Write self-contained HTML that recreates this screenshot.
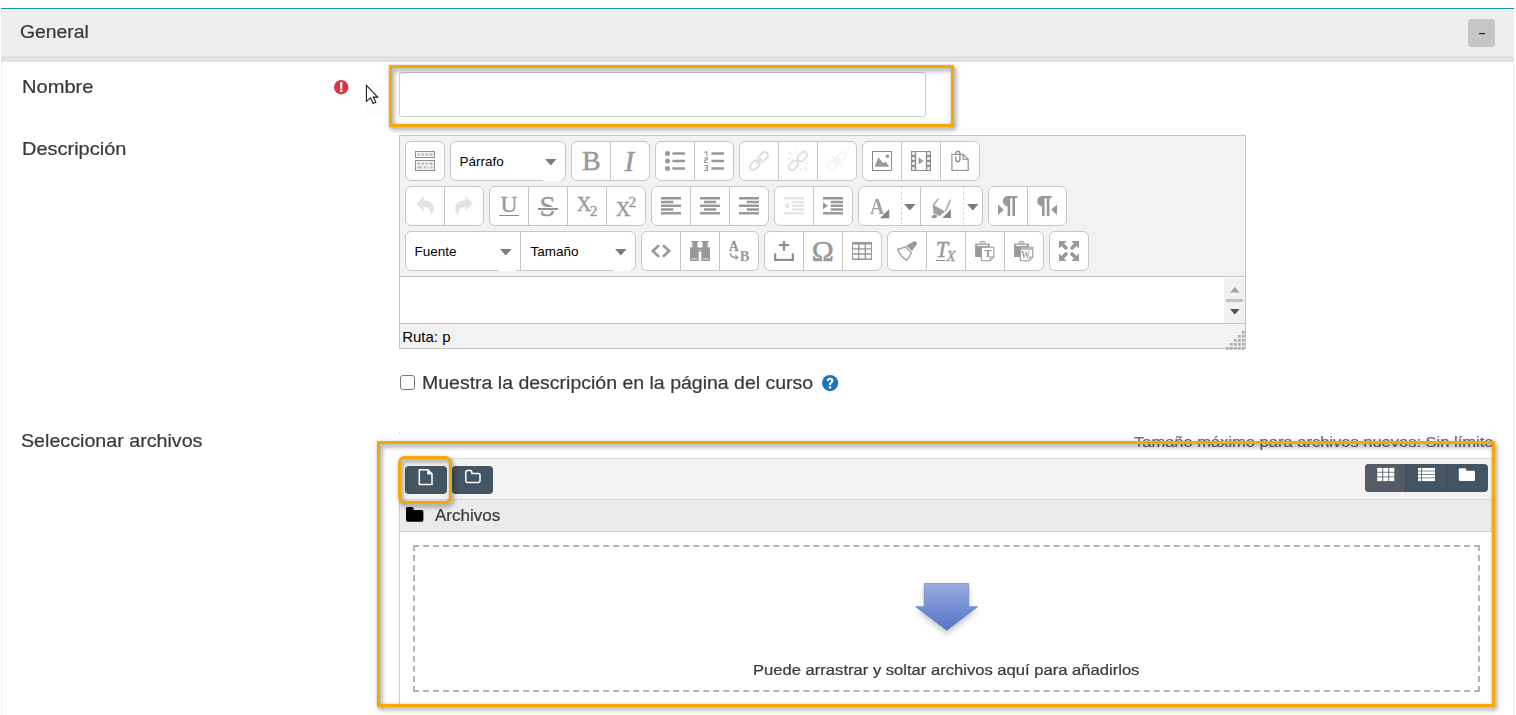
<!DOCTYPE html>
<html lang="es">
<head>
<meta charset="utf-8">
<title>General</title>
<style>
html,body{margin:0;padding:0;background:#fff;}
body{width:1516px;height:715px;position:relative;overflow:hidden;font-family:"Liberation Sans",sans-serif;color:#373a3c;}
.a{position:absolute;box-sizing:border-box;}
.t{position:absolute;white-space:nowrap;line-height:1;transform-origin:0 0;}
svg{position:absolute;overflow:visible;}
/* header */
#teal{left:1px;top:8px;width:1513px;height:1px;background:#0a98a8;}
#hdr{left:1px;top:9px;width:1513px;height:47px;background:#eeeeee;}
#band{left:1px;top:56px;width:1513px;height:6px;background:#e1e1e1;}
#lline{left:1px;top:62px;width:1px;height:653px;background:#f1f1f1;}
#rline{left:1513px;top:62px;width:1px;height:653px;background:#eeeeee;}
#collapse{left:1468px;top:19px;width:27px;height:28px;background:#c6c6c6;border-radius:3px;}
#collapse i{position:absolute;left:11px;top:14px;width:6px;height:1px;background:#333;}
/* name input */
#name{left:399px;top:72px;width:527px;height:45px;border:1px solid #ccc;border-radius:3px;background:#fff;}
.hl{position:absolute;box-sizing:border-box;border:3px solid #f6a806;filter:drop-shadow(2px 3px 2px rgba(0,0,0,.35)) drop-shadow(0 0 1.6px rgba(0,0,0,.16));}
/* editor */
#ed{left:399px;top:135px;width:847px;height:214px;border:1px solid #c4c4c4;background:#f2f2f2;}
#edc{left:400px;top:277px;width:845px;height:46px;background:#fff;}
.ln{position:absolute;height:1px;background:#c4c4c4;}
.b{position:absolute;box-sizing:border-box;height:40px;background:#fff;border:1px solid #c6c6c6;border-radius:6px;}
.d{position:absolute;width:1px;height:38px;background:#c6c6c6;}
.dd{position:absolute;width:0;height:38px;border-left:1px dashed #d9d9d9;}
.wg{position:absolute;width:18px;height:2px;background:#fff;}
.st{font-size:13.5px;color:#000;}
/* file manager */
#fmt{left:399px;top:458px;width:1094px;height:42px;background:#f3f3f3;border-top:1px solid #dcdcdc;border-left:1px solid #ccc;border-bottom:1px solid #dadada;}
#fmp{left:399px;top:500px;width:1094px;height:32px;background:#ebebeb;border-left:1px solid #ccc;border-bottom:1px solid #d4d4d4;}
#fml{left:399px;top:532px;width:1px;height:172px;background:#ccc;}
.fb{position:absolute;box-sizing:border-box;height:28px;background:#435563;border-radius:4px;}
#drop{left:413px;top:545px;width:1067px;height:147px;border:2px dashed #b5b5b5;}
</style>
</head>
<body>
<!-- header -->
<div class="a" id="teal"></div>
<div class="a" id="hdr"></div>
<div class="a" id="band"></div>
<div class="a" id="lline"></div>
<div class="a" id="rline"></div>
<div class="a" id="collapse"></div>
<span class="t" id="tDash" style="left:1478.2px;top:26.4px;font-size:14px;color:#222;transform:scaleX(1.75);">-</span>
<span class="t" id="tGeneral" style="left:19.5px;top:23.3px;font-size:18px;transform:scaleX(1.075);-webkit-text-stroke:.22px #373a3c;">General</span>

<!-- labels -->
<span class="t" id="tNombre" style="left:21.5px;top:77.6px;font-size:18.5px;transform:scaleX(1.085);-webkit-text-stroke:.22px #373a3c;">Nombre</span>
<span class="t" id="tDesc" style="left:21.5px;top:140.4px;font-size:18.5px;transform:scaleX(1.08);-webkit-text-stroke:.22px #373a3c;">Descripción</span>
<span class="t" id="tSel" style="left:21.4px;top:431.8px;font-size:18.5px;transform:scaleX(1.063);-webkit-text-stroke:.22px #373a3c;">Seleccionar archivos</span>

<!-- required icon -->
<svg id="req" style="left:334px;top:79.6px" width="14.4" height="14.4" viewBox="0 0 14.4 14.4"><circle cx="7.2" cy="7.2" r="7.2" fill="#dc3545"/><path d="M5.9 2.2 H8.5 L8.2 8.7 H6.2 Z" fill="#fff"/><rect x="6" y="9.6" width="2.4" height="2.4" rx=".5" fill="#fff"/></svg>

<!-- name input -->
<div class="a" id="name"></div>
<div class="hl" style="left:389px;top:65px;width:565px;height:62px;"></div>

<!-- editor -->
<div class="a" id="ed"></div>
<div class="a" id="edc"></div>
<div class="ln" style="left:400px;top:276px;width:845px;"></div>
<div class="ln" style="left:400px;top:323px;width:845px;"></div>
<div id="tb">
<div class="b" style="left:405px;top:141px;width:40px"></div>
<svg style="left:415.0px;top:151.0px" width="20" height="20" viewBox="0 0 20 20"><rect x=".5" y=".5" width="19" height="6" fill="#f4f4f4" stroke="#8e8e8e"/><rect x=".5" y="9.5" width="19" height="10" fill="#f4f4f4" stroke="#8e8e8e"/><rect x="2.5" y="2.5" width="2.5" height="2" fill="#b4b4b4"/><rect x="6.4" y="2.5" width="2.5" height="2" fill="#b4b4b4"/><rect x="10.3" y="2.5" width="2.5" height="2" fill="#b4b4b4"/><rect x="14.2" y="2.5" width="3.4" height="2" fill="#b4b4b4"/><rect x="2.5" y="11.6" width="2.5" height="2" fill="#b4b4b4"/><rect x="6.4" y="11.6" width="2.5" height="2" fill="#b4b4b4"/><rect x="10.3" y="11.6" width="2.5" height="2" fill="#b4b4b4"/><rect x="14.2" y="11.6" width="3.4" height="2" fill="#b4b4b4"/><rect x="2.5" y="15.4" width="4.2" height="2" fill="#b4b4b4"/><rect x="8.6" y="15.4" width="2.3" height="2" fill="#b4b4b4"/><rect x="12.3" y="15.4" width="1.2" height="2" fill="#b4b4b4"/><rect x="15.3" y="15.4" width="2.3" height="2" fill="#b4b4b4"/></svg>
<div class="b" style="left:450px;top:141px;width:116px"></div>
<span class="t st" id="tParrafo" style="left:459.6px;top:155.2px">Párrafo</span>
<svg style="left:545px;top:159px" width="11.6" height="6.4" viewBox="0 0 11.6 6.4"><path d="M0 0H11.6L5.8 6.4Z" fill="#7c7c7c"/></svg>
<div class="wg" style="left:543px;top:179px"></div>
<div class="b" style="left:571px;top:141px;width:79px"></div>
<div class="d" style="left:610px;top:142px"></div>
<span class="t" id="tB" style="left:582px;top:147.4px;font:28px 'Liberation Serif',serif;color:#999;line-height:1;-webkit-text-stroke:.5px #999">B</span>
<span class="t" id="tI" style="left:624.6px;top:146.6px;font:italic 29px 'Liberation Serif',serif;color:#999;line-height:1;-webkit-text-stroke:.5px #999">I</span>
<div class="b" style="left:655px;top:141px;width:79px"></div>
<div class="d" style="left:694px;top:142px"></div>
<svg style="left:665.0px;top:151.0px" width="20" height="20" viewBox="0 0 20 20"><circle cx="2.5" cy="2.5" r="2.5" fill="#999"/><rect x="7.4" y="1.25" width="12.6" height="2.5" fill="#999"/><circle cx="2.5" cy="10" r="2.5" fill="#999"/><rect x="7.4" y="8.75" width="12.6" height="2.5" fill="#999"/><circle cx="2.5" cy="17.5" r="2.5" fill="#999"/><rect x="7.4" y="16.25" width="12.6" height="2.5" fill="#999"/></svg>
<svg style="left:704.0px;top:151.0px" width="20" height="20" viewBox="0 0 20 20"><rect x="7.4" y="1.25" width="12.6" height="2.5" fill="#999"/><rect x="7.4" y="8.75" width="12.6" height="2.5" fill="#999"/><rect x="7.4" y="16.25" width="12.6" height="2.5" fill="#999"/><path d="M0.4 1 L2.2 0.2 H3.4 V4.8 H2.2 V1.5 L0.4 2 Z" fill="#999"/><path d="M0.2 6.3 H4 V9.4 H1.4 V11 H4 V12.1 H0.2 V8.4 H2.8 V7.4 H0.2 Z" fill="#999"/><path d="M0.2 14 H4 V20 H0.2 V18.9 H2.8 V17.5 H0.8 V16.5 H2.8 V15.1 H0.2 Z" fill="#999"/></svg>
<div class="b" style="left:739px;top:141px;width:118px"></div>
<div class="d" style="left:778px;top:142px"></div>
<div class="d" style="left:817px;top:142px"></div>
<svg style="left:749.0px;top:151.0px" width="20" height="20" viewBox="0 0 20 20"><g fill="none" stroke="#dedede" stroke-width="2" stroke-linecap="round"><rect x="-5.4" y="-3.3" width="10.8" height="6.6" rx="3.3" transform="translate(14.2 5.8) rotate(-45)"/><rect x="-5.4" y="-3.3" width="10.8" height="6.6" rx="3.3" transform="translate(5.8 14.2) rotate(-45)"/><path d="M7.6 12.4 L12.4 7.6"/></g></svg>
<svg style="left:788.0px;top:151.0px" width="20" height="20" viewBox="0 0 20 20"><g fill="none" stroke="#e0e0e0" stroke-width="2" stroke-linecap="round"><rect x="-5.4" y="-3.3" width="10.8" height="6.6" rx="3.3" transform="translate(14.4 5.6) rotate(-45)"/><rect x="-5.4" y="-3.3" width="10.8" height="6.6" rx="3.3" transform="translate(5.6 14.4) rotate(-45)"/></g><g stroke="#e4e4e4" stroke-width="1.3"><path d="M1 1 L4.2 4.2 M7.6 0 V2.6 M0 7.6 H2.6 M19 19 L15.8 15.8 M12.4 20 V17.4 M20 12.4 H17.4"/></g></svg>
<svg style="left:827.0px;top:151.0px" width="20" height="20" viewBox="0 0 20 20"><g fill="none" stroke="#f3f3f3" stroke-width="2" stroke-linecap="round"><rect x="-5.4" y="-3.3" width="10.8" height="6.6" rx="3.3" transform="translate(14.2 5.8) rotate(-45)"/><rect x="-5.4" y="-3.3" width="10.8" height="6.6" rx="3.3" transform="translate(5.8 14.2) rotate(-45)"/><path d="M7.6 12.4 L12.4 7.6"/><path d="M4 4 L16 16" stroke-width="1.3"/></g></svg>
<div class="b" style="left:862px;top:141px;width:118px"></div>
<div class="d" style="left:901px;top:142px"></div>
<div class="d" style="left:940px;top:142px"></div>
<svg style="left:872.0px;top:151.0px" width="20" height="20" viewBox="0 0 20 20"><rect x=".5" y=".5" width="19" height="19" fill="#fff" stroke="#8a8a8a"/><path d="M2.6 15.8 L6.4 6.2 L11.3 12.3 L13.4 10.6 L17.4 15.8 Z" fill="#999"/><circle cx="15.4" cy="5.3" r="1.8" fill="#999"/></svg>
<svg style="left:911.0px;top:151.0px" width="20" height="20" viewBox="0 0 20 20"><rect x="0" y="0" width="20" height="20" fill="#8e8e8e"/><rect x="5.2" y="1" width="9.6" height="18" fill="#fff"/><rect x="1.2" y="1.2" width="2.6" height="2.6" fill="#fff"/><rect x="1.2" y="6.2" width="2.6" height="2.6" fill="#fff"/><rect x="1.2" y="11.2" width="2.6" height="2.6" fill="#fff"/><rect x="1.2" y="16.2" width="2.6" height="2.6" fill="#fff"/><rect x="16.2" y="1.2" width="2.6" height="2.6" fill="#fff"/><rect x="16.2" y="6.2" width="2.6" height="2.6" fill="#fff"/><rect x="16.2" y="11.2" width="2.6" height="2.6" fill="#fff"/><rect x="16.2" y="16.2" width="2.6" height="2.6" fill="#fff"/><path d="M7.6 6.2 V13.6 L12.6 9.9 Z" fill="#999"/></svg>
<svg style="left:949.8px;top:151.0px" width="20" height="20" viewBox="0 0 20 20"><path d="M1.9 3.3 H13.2 L18.2 8.4 V19.4 H1.9 Z" fill="#fff" stroke="#9a9a9a" stroke-width="1.3" stroke-linejoin="round"/><path d="M13.2 3.3 V8.4 H18.2" fill="none" stroke="#9a9a9a" stroke-width="1.3"/><path d="M5.7 3.2 V2.4 a2.1 2.1 0 0 1 4.2 0 V8.6 a2.1 2.1 0 0 1 -4.2 0 V5.6" fill="none" stroke="#909090" stroke-width="1.4"/></svg>
<div class="b" style="left:405px;top:186px;width:79px"></div>
<div class="d" style="left:444px;top:187px"></div>
<svg style="left:415.0px;top:196.0px" width="20" height="20" viewBox="0 0 20 20"><path d="M1.2 7.4 L8.7 0 V4.2 C14.2 4.2 18.8 7.4 18.8 12.4 C18.8 15.6 17 18.4 15.3 20 C16.6 15 14 10.8 8.7 10.8 V15 Z" fill="#e3e3e3"/></svg>
<svg style="left:453.5px;top:196.0px" width="20" height="20" viewBox="0 0 20 20"><path d="M1.2 7.4 L8.7 0 V4.2 C14.2 4.2 18.8 7.4 18.8 12.4 C18.8 15.6 17 18.4 15.3 20 C16.6 15 14 10.8 8.7 10.8 V15 Z" fill="#e3e3e3" transform="translate(20 0) scale(-1 1)"/></svg>
<div class="b" style="left:489px;top:186px;width:157px"></div>
<div class="d" style="left:528px;top:187px"></div>
<div class="d" style="left:567px;top:187px"></div>
<div class="d" style="left:606px;top:187px"></div>
<span class="t" id="tU" style="left:500.6px;top:192.8px;font:23.5px 'Liberation Serif',serif;color:#999;line-height:1;-webkit-text-stroke:.35px #999">U</span>
<div class="a" style="left:499px;top:214.6px;width:20px;height:1.5px;background:#8c8c8c"></div>
<span class="t" id="tS" style="left:539.6px;top:192px;font:29px 'Liberation Serif',serif;color:#999;line-height:1;-webkit-text-stroke:.35px #999">S</span>
<div class="a" style="left:538px;top:206.8px;width:20px;height:4.4px;background:#fff"></div>
<div class="a" style="left:538px;top:208.3px;width:20px;height:1.4px;background:#929292"></div>
<span class="t" id="tX1" style="left:576.8px;top:193.8px;font:20.3px 'Liberation Serif',serif;color:#999;line-height:1;-webkit-text-stroke:.35px #999">X</span>
<span class="t" id="tX1s" style="left:589.8px;top:202.6px;font:15.5px 'Liberation Serif',serif;color:#999;line-height:1;-webkit-text-stroke:.3px #999">2</span>
<span class="t" id="tX2" style="left:615.8px;top:198.7px;font:20.3px 'Liberation Serif',serif;color:#999;line-height:1;-webkit-text-stroke:.35px #999">X</span>
<span class="t" id="tX2s" style="left:628.5px;top:194.2px;font:15.5px 'Liberation Serif',serif;color:#999;line-height:1;-webkit-text-stroke:.3px #999">2</span>
<div class="b" style="left:651px;top:186px;width:118px"></div>
<div class="d" style="left:690px;top:187px"></div>
<div class="d" style="left:729px;top:187px"></div>
<svg style="left:661.0px;top:197.25px" width="20" height="17.5" viewBox="0 0 20 17.5"><rect x="0" y="0" width="20" height="2.5" fill="#999"/><rect x="0" y="3.75" width="12.3" height="2.5" fill="#999"/><rect x="0" y="7.5" width="20" height="2.5" fill="#999"/><rect x="0" y="11.25" width="12.3" height="2.5" fill="#999"/><rect x="0" y="15" width="20" height="2.5" fill="#999"/></svg>
<svg style="left:699.5px;top:197.25px" width="20" height="17.5" viewBox="0 0 20 17.5"><rect x="0" y="0" width="20" height="2.5" fill="#999"/><rect x="3.9" y="3.75" width="12.3" height="2.5" fill="#999"/><rect x="0" y="7.5" width="20" height="2.5" fill="#999"/><rect x="3.9" y="11.25" width="12.3" height="2.5" fill="#999"/><rect x="0" y="15" width="20" height="2.5" fill="#999"/></svg>
<svg style="left:738.5px;top:197.25px" width="20" height="17.5" viewBox="0 0 20 17.5"><rect x="0" y="0" width="20" height="2.5" fill="#999"/><rect x="7.7" y="3.75" width="12.3" height="2.5" fill="#999"/><rect x="0" y="7.5" width="20" height="2.5" fill="#999"/><rect x="7.7" y="11.25" width="12.3" height="2.5" fill="#999"/><rect x="0" y="15" width="20" height="2.5" fill="#999"/></svg>
<div class="b" style="left:774px;top:186px;width:79px"></div>
<div class="d" style="left:813px;top:187px"></div>
<svg style="left:784.0px;top:197.25px" width="20" height="17.5" viewBox="0 0 20 17.5"><rect x="0" y="0" width="20" height="2.5" fill="#e6e6e6"/><rect x="0" y="15" width="20" height="2.5" fill="#e6e6e6"/><rect x="7.7" y="3.75" width="12.3" height="2.5" fill="#e6e6e6"/><rect x="7.7" y="7.5" width="12.3" height="2.5" fill="#e6e6e6"/><rect x="7.7" y="11.25" width="12.3" height="2.5" fill="#e6e6e6"/><path d="M5 5.2 V12.3 L0 8.75 Z" fill="#e6e6e6"/></svg>
<svg style="left:822.5px;top:197.25px" width="20" height="17.5" viewBox="0 0 20 17.5"><rect x="0" y="0" width="20" height="2.5" fill="#999"/><rect x="0" y="15" width="20" height="2.5" fill="#999"/><rect x="7.7" y="3.75" width="12.3" height="2.5" fill="#999"/><rect x="7.7" y="7.5" width="12.3" height="2.5" fill="#999"/><rect x="7.7" y="11.25" width="12.3" height="2.5" fill="#999"/><path d="M0 5.2 V12.3 L5 8.75 Z" fill="#999"/></svg>
<div class="b" style="left:858px;top:186px;width:125px"></div>
<div class="dd" style="left:901px;top:187px"></div>
<div class="d" style="left:920px;top:187px"></div>
<div class="dd" style="left:963px;top:187px"></div>
<span class="t" id="tA" style="left:870.2px;top:194.7px;font:bold 23px 'Liberation Serif',serif;color:#a2a2a2;line-height:1;transform:scaleX(.86)">A</span>
<svg style="left:879.8px;top:208.6px" width="9.2" height="9.3" viewBox="0 0 9.2 9.3"><path d="M9.2 0 V9.3 H0 Z" fill="#858585"/></svg>
<svg style="left:904.4px;top:203.8px" width="11.6" height="6.4" viewBox="0 0 11.6 6.4"><path d="M0 0H11.6L5.8 6.4Z" fill="#7c7c7c"/></svg>
<svg style="left:931px;top:198px" width="20" height="20" viewBox="0 0 20 20"><path d="M6.4 0.4 H8.4 L3.4 7.4 L1.8 6.6 Z" fill="#b0b0b0"/><path d="M19 0.4 L19.8 3.4 L15.4 13.4 L13.6 12.8 Z" fill="#b4b4b4"/><path d="M1.7 6.6 L14.2 13.6 L8.6 18.2 L2.6 15.2 Z" fill="#a0a0a0"/><path d="M2.6 16 L6.2 17.8 L5.4 19.9 H0 Z" fill="#9a9a9a"/><path d="M19.9 11 V19.9 H11.4 Z" fill="#858585"/></svg>
<svg style="left:966.6px;top:203.8px" width="11.6" height="6.4" viewBox="0 0 11.6 6.4"><path d="M0 0H11.6L5.8 6.4Z" fill="#7c7c7c"/></svg>
<div class="b" style="left:988px;top:186px;width:79px"></div>
<div class="d" style="left:1027px;top:187px"></div>
<svg style="left:998.0px;top:196.0px" width="20" height="20" viewBox="0 0 20 20"><path d="M0 8.6 V18.9 L5.8 13.75 Z" fill="#999"/><g transform="translate(4.2 0)"><path d="M6.2 0 H15 V2.2 H12.8 V20 H10.2 V2.2 H8 V20 H5.4 V10.4 A5.2 5.2 0 0 1 6.2 0 Z" fill="#999"/></g></svg>
<svg style="left:1036.5px;top:196.0px" width="20" height="20" viewBox="0 0 20 20"><g transform="translate(-0.4 0)"><path d="M6.2 0 H15 V2.2 H12.8 V20 H10.2 V2.2 H8 V20 H5.4 V10.4 A5.2 5.2 0 0 1 6.2 0 Z" fill="#999"/></g><path d="M20 8.6 V18.9 L14.2 13.75 Z" fill="#999"/></svg>
<div class="b" style="left:405px;top:231px;width:231px"></div>
<div class="d" style="left:520px;top:232px"></div>
<span class="t st" id="tFuente" style="left:414.6px;top:245.2px">Fuente</span>
<svg style="left:500px;top:249px" width="11.6" height="6.4" viewBox="0 0 11.6 6.4"><path d="M0 0H11.6L5.8 6.4Z" fill="#7c7c7c"/></svg>
<div class="wg" style="left:498px;top:269px"></div>
<span class="t st" id="tTamano" style="left:530.6px;top:245.2px">Tamaño</span>
<svg style="left:615px;top:249px" width="11.6" height="6.4" viewBox="0 0 11.6 6.4"><path d="M0 0H11.6L5.8 6.4Z" fill="#7c7c7c"/></svg>
<div class="wg" style="left:613px;top:269px"></div>
<div class="b" style="left:641px;top:231px;width:118px"></div>
<div class="d" style="left:680px;top:232px"></div>
<div class="d" style="left:719px;top:232px"></div>
<svg style="left:651.0px;top:241.0px" width="20" height="20" viewBox="0 0 20 20"><g fill="none" stroke="#999" stroke-width="2.6"><path d="M8 4.2 L1.8 10 L8 15.8"/><path d="M12 4.2 L18.2 10 L12 15.8"/></g></svg>
<svg style="left:689.5px;top:241.0px" width="20" height="20" viewBox="0 0 20 20"><rect x="1.2" y="0" width="7.5" height="1" fill="#999"/><rect x="11.3" y="0" width="7.5" height="1" fill="#999"/><rect x="2.3" y="1" width="5.2" height="6" fill="#999"/><rect x="12.5" y="1" width="5.2" height="6" fill="#999"/><rect x="0" y="6.3" width="8.7" height="13.7" fill="#999"/><rect x="11.3" y="6.3" width="8.7" height="13.7" fill="#999"/><rect x="8.2" y="6.6" width="3.6" height="4.1" fill="#999"/><rect x="9" y="8.8" width="2" height=".8" fill="#dcdcdc"/><rect x="1.4" y="17.2" width="6" height="1.4" rx=".7" fill="#d4d4d4"/><rect x="12.6" y="17.2" width="6" height="1.4" rx=".7" fill="#d4d4d4"/></svg>
<span class="t" id="tRA" style="left:728.8px;top:239.2px;font:bold 14.4px 'Liberation Serif',serif;color:#999;line-height:1;transform:scaleX(.94);-webkit-text-stroke:.3px #999">A</span>
<span class="t" id="tRB" style="left:739.8px;top:249px;font:bold 14.6px 'Liberation Serif',serif;color:#999;line-height:1">B</span>
<svg style="left:728.5px;top:241px" width="20" height="20" viewBox="0 0 20 20"><path d="M1.6 12.2 C1.6 15 3.4 16.5 6.6 16.5" fill="none" stroke="#999" stroke-width="1.6"/><path d="M6.4 13.6 L9.8 16.5 L6.4 19.4 Z" fill="#999"/></svg>
<div class="b" style="left:764px;top:231px;width:118px"></div>
<div class="d" style="left:803px;top:232px"></div>
<div class="d" style="left:842px;top:232px"></div>
<svg style="left:774.0px;top:241.0px" width="20" height="20" viewBox="0 0 20 20"><path d="M4.9 4 H15.1 M10 0 V10" stroke="#8e8e8e" stroke-width="2.2" fill="none"/><path d="M1.1 12.4 V18.9 H18.9 V12.4" stroke="#8e8e8e" stroke-width="2.2" fill="none"/></svg>
<span class="t" id="tOmega" style="left:811.8px;top:237px;font:29.6px 'Liberation Serif',serif;color:#999;line-height:1;-webkit-text-stroke:.6px #999">Ω</span>
<svg style="left:851.5px;top:241.0px" width="20" height="20" viewBox="0 0 20 20"><rect x="0" y="1" width="20" height="18" fill="#9a9a9a"/><rect x="1" y="3.6" width="5" height="3.6" fill="#fff"/><rect x="1" y="8.6" width="5" height="3.6" fill="#fff"/><rect x="1" y="13.8" width="5" height="3.6" fill="#fff"/><rect x="7.4" y="3.6" width="5.2" height="3.6" fill="#fff"/><rect x="7.4" y="8.6" width="5.2" height="3.6" fill="#fff"/><rect x="7.4" y="13.8" width="5.2" height="3.6" fill="#fff"/><rect x="14" y="3.6" width="5" height="3.6" fill="#fff"/><rect x="14" y="8.6" width="5" height="3.6" fill="#fff"/><rect x="14" y="13.8" width="5" height="3.6" fill="#fff"/></svg>
<div class="b" style="left:887px;top:231px;width:157px"></div>
<div class="d" style="left:926px;top:232px"></div>
<div class="d" style="left:965px;top:232px"></div>
<div class="d" style="left:1004px;top:232px"></div>
<svg style="left:897.0px;top:241.0px" width="20" height="20" viewBox="0 0 20 20"><path d="M15.4 1.2 L17.2 0.3 Q19.9 0 19.9 2.2 L19.6 3.8 L14.9 10 L9.3 4.4 Z" fill="#999"/><path d="M8.2 5.6 C6 7 3 7.8 0.7 8.2 C2.2 12.6 5.4 16.8 9.7 19.3 C11.8 17 13.4 14.4 14.3 11.7 Z" fill="#fff" stroke="#a0a0a0" stroke-width="1.4" stroke-linejoin="round"/></svg>
<span class="t" id="tT" style="left:935.7px;top:238.9px;font:italic 22.5px 'Liberation Serif',serif;color:#999;line-height:1;-webkit-text-stroke:.4px #999">T</span>
<span class="t" id="tTx" style="left:946.5px;top:249.2px;font:italic 14.6px 'Liberation Serif',serif;color:#999;line-height:1;-webkit-text-stroke:.3px #999">X</span>
<div class="a" style="left:936px;top:259.6px;width:8.8px;height:1.4px;background:#8c8c8c"></div>
<svg style="left:974.5px;top:241.0px" width="20" height="20" viewBox="0 0 20 20"><rect x="0.1" y="2.6" width="14.7" height="13.4" fill="#999"/><rect x="5.2" y="0.4" width="4.6" height="2.6" rx="1" fill="#e8e8e8" stroke="#999" stroke-width="1"/><rect x="2.2" y="3.8" width="10.7" height="1.3" fill="#fff"/><path d="M6.3 6.3 H18.8 V16 L15.2 19.7 H6.3 Z" fill="#fff" stroke="#9a9a9a" stroke-width="1.1"/><path d="M15.2 19.7 V16 H18.8" fill="#ddd" stroke="#9a9a9a" stroke-width=".9"/></svg>
<span class="t" id="tPT" style="left:984.4px;top:248.6px;font:bold 10.5px 'Liberation Serif',serif;color:#8e8e8e;line-height:1">T</span>
<svg style="left:1013.5px;top:241.0px" width="20" height="20" viewBox="0 0 20 20"><rect x="0.1" y="2.6" width="14.7" height="13.4" fill="#999"/><rect x="5.2" y="0.4" width="4.6" height="2.6" rx="1" fill="#e8e8e8" stroke="#999" stroke-width="1"/><rect x="2.2" y="3.8" width="10.7" height="1.3" fill="#fff"/><path d="M6.3 6.3 H18.8 V16 L15.2 19.7 H6.3 Z" fill="#fff" stroke="#9a9a9a" stroke-width="1.1"/><path d="M15.2 19.7 V16 H18.8" fill="#ddd" stroke="#9a9a9a" stroke-width=".9"/><rect x="7" y="7.2" width="11.2" height="1.6" fill="#aaa"/></svg>
<span class="t" id="tPW" style="left:1021.2px;top:249.6px;font:bold 10px 'Liberation Serif',serif;color:#a0a0a0;line-height:1;transform:scaleX(.92)">W</span>
<div class="b" style="left:1049px;top:231px;width:40px"></div>
<svg style="left:1059.0px;top:241.0px" width="20" height="20" viewBox="0 0 20 20"><path d="M0 0 H7.6 L5.1 2.5 L8.3 5.7 A1.84 1.84 0 0 1 5.7 8.3 L2.5 5.1 L0 7.6 Z" fill="#999" transform=""/><path d="M0 0 H7.6 L5.1 2.5 L8.3 5.7 A1.84 1.84 0 0 1 5.7 8.3 L2.5 5.1 L0 7.6 Z" fill="#999" transform="translate(20 0) scale(-1 1)"/><path d="M0 0 H7.6 L5.1 2.5 L8.3 5.7 A1.84 1.84 0 0 1 5.7 8.3 L2.5 5.1 L0 7.6 Z" fill="#999" transform="translate(0 20) scale(1 -1)"/><path d="M0 0 H7.6 L5.1 2.5 L8.3 5.7 A1.84 1.84 0 0 1 5.7 8.3 L2.5 5.1 L0 7.6 Z" fill="#999" transform="translate(20 20) scale(-1 -1)"/></svg>
<div class="a" style="left:1224px;top:278px;width:21px;height:45px;background:#f1f1f1"></div>
<svg style="left:1229.8px;top:286.8px" width="9.6" height="5.4" viewBox="0 0 9.6 5.4"><path d="M0 5.4 L4.8 0 L9.6 5.4 Z" fill="#a3a3a3"/></svg>
<div class="a" style="left:1226px;top:299px;width:17px;height:3px;background:#c1c1c1"></div>
<svg style="left:1229.8px;top:308.8px" width="9.6" height="5.4" viewBox="0 0 9.6 5.4"><path d="M0 0 L4.8 5.4 L9.6 0 Z" fill="#505050"/></svg>
<svg style="left:1226px;top:331px" width="19" height="19" viewBox="0 0 19 19"><rect x="16" y="0" width="2.7" height="2.7" fill="#adadad"/><rect x="16" y="4" width="2.7" height="2.7" fill="#adadad"/><rect x="12" y="4" width="2.7" height="2.7" fill="#adadad"/><rect x="16" y="8" width="2.7" height="2.7" fill="#adadad"/><rect x="12" y="8" width="2.7" height="2.7" fill="#adadad"/><rect x="8" y="8" width="2.7" height="2.7" fill="#adadad"/><rect x="16" y="12" width="2.7" height="2.7" fill="#adadad"/><rect x="12" y="12" width="2.7" height="2.7" fill="#adadad"/><rect x="8" y="12" width="2.7" height="2.7" fill="#adadad"/><rect x="4" y="12" width="2.7" height="2.7" fill="#adadad"/><rect x="16" y="16" width="2.7" height="2.7" fill="#adadad"/><rect x="12" y="16" width="2.7" height="2.7" fill="#adadad"/><rect x="8" y="16" width="2.7" height="2.7" fill="#adadad"/><rect x="4" y="16" width="2.7" height="2.7" fill="#adadad"/><rect x="0" y="16" width="2.7" height="2.7" fill="#adadad"/></svg>
</div><!--/tb-->
<span class="t" id="tRuta" style="left:402.2px;top:328.4px;font-size:15px;color:#000;transform:translateY(.6px);">Ruta: p</span>

<!-- checkbox row -->
<div class="a" style="left:400px;top:374.5px;width:15px;height:15px;border:1px solid #767676;border-radius:3px;background:#fff;"></div>
<span class="t" id="tMuestra" style="left:422.3px;top:373.5px;font-size:18px;transform:scaleX(1.083);-webkit-text-stroke:.22px #373a3c;">Muestra la descripción en la página del curso</span>
<svg id="help" style="left:822px;top:375px" width="16.2" height="16.2" viewBox="0 0 16 16"><circle cx="8" cy="8" r="8" fill="#1b75bc"/><g transform="translate(8 8.1) scale(1.16) translate(-8.1 -8)"><path d="M5.2 6.1 C5.2 4.3 6.5 3.3 8.1 3.3 C9.8 3.3 11 4.3 11 5.8 C11 7.9 8.9 7.9 8.9 9.6 L7 9.6 C7 7.4 9 7.3 9 6 C9 5.4 8.6 5.1 8.1 5.1 C7.5 5.1 7.1 5.5 7.1 6.3 Z M7 10.6 h2 v2 h-2 Z" fill="#fff"/></g></svg>

<!-- file manager -->
<div class="a" style="left:399px;top:432px;width:1px;height:2px;background:#dcdcdc;"></div>
<span class="t" id="tMax" style="left:1134px;top:434.1px;font-size:15.4px;color:#6a6a6a;transform:scaleX(1.072);-webkit-text-stroke:.2px #6a6a6a;">Tamaño máximo para archivos nuevos: Sin límite</span>
<div class="a" id="fmt"></div>
<div class="a" id="fmp"></div>
<div class="a" id="fml"></div>
<div class="fb" style="left:405px;top:466px;width:42px;"></div>
<svg style="left:405px;top:466px" width="42" height="28" viewBox="0 0 42 28"><path d="M14.3 3.7 H22.9 L27 7.8 V18.6 H14.3 Z" fill="none" stroke="#fff" stroke-width="1.5" stroke-linejoin="round"/><path d="M22.6 3.9 V8.1 H26.8 Z" fill="#fff" stroke="#fff" stroke-width=".8" stroke-linejoin="round"/></svg>
<div class="fb" style="left:452px;top:466px;width:41px;"></div>
<svg style="left:452px;top:466px" width="41" height="28" viewBox="0 0 41 28"><path d="M13.8 6 a1.4 1.4 0 0 1 1.4 -1.4 H18.5 a1.3 1.3 0 0 1 1.3 1.3 V7.4 H26.6 a1.4 1.4 0 0 1 1.4 1.4 V15 a1.4 1.4 0 0 1 -1.4 1.4 H15.2 a1.4 1.4 0 0 1 -1.4 -1.4 Z" fill="none" stroke="#fff" stroke-width="1.5"/></svg>
<div class="fb" style="left:1365px;top:464px;width:123px;"></div>
<div class="a" style="left:1365px;top:464px;width:41px;height:28px;background:#555c66;border-radius:4px 0 0 4px;"></div>
<div class="a" style="left:1405px;top:464px;width:1px;height:28px;background:#3b4a56;"></div>
<div class="a" style="left:1446px;top:464px;width:1px;height:28px;background:#3b4a56;"></div>
<svg style="left:1365px;top:464px" width="123" height="28" viewBox="0 0 123 28"><g fill="#fff">
<rect x="12.2" y="3.9" width="5.1" height="3.9"/><rect x="18.2" y="3.9" width="5.1" height="3.9"/><rect x="24.2" y="3.9" width="5.1" height="3.9"/>
<rect x="12.2" y="8.6" width="5.1" height="3.9"/><rect x="18.2" y="8.6" width="5.1" height="3.9"/><rect x="24.2" y="8.6" width="5.1" height="3.9"/>
<rect x="12.2" y="13.3" width="5.1" height="3.8"/><rect x="18.2" y="13.3" width="5.1" height="3.8"/><rect x="24.2" y="13.3" width="5.1" height="3.8"/>
<rect x="53" y="3.9" width="3" height="2.8"/><rect x="56.8" y="3.9" width="13.2" height="2.8"/>
<rect x="53" y="7.35" width="3" height="2.8"/><rect x="56.8" y="7.35" width="13.2" height="2.8"/>
<rect x="53" y="10.8" width="3" height="2.8"/><rect x="56.8" y="10.8" width="13.2" height="2.8"/>
<rect x="53" y="14.25" width="3" height="2.85"/><rect x="56.8" y="14.25" width="13.2" height="2.85"/>
<path d="M93.8 5.6 a1.4 1.4 0 0 1 1.4 -1.4 H99.8 a1.4 1.4 0 0 1 1.4 1.4 V6.8 H108.6 a1.4 1.4 0 0 1 1.4 1.4 V15.7 a1.4 1.4 0 0 1 -1.4 1.4 H95.2 a1.4 1.4 0 0 1 -1.4 -1.4 Z"/>
</g></svg>
<svg style="left:405.7px;top:507.3px" width="17.4" height="14.7" viewBox="0 0 17.4 14.7"><path d="M0 1.6 a1.6 1.6 0 0 1 1.6 -1.6 H6 a1.6 1.6 0 0 1 1.6 1.6 V2.9 H15.8 a1.6 1.6 0 0 1 1.6 1.6 V13.1 a1.6 1.6 0 0 1 -1.6 1.6 H1.6 a1.6 1.6 0 0 1 -1.6 -1.6 Z" fill="#000"/></svg>
<span class="t" id="tArch" style="left:435.1px;top:506.9px;font-size:16.3px;transform:scaleX(1.045);-webkit-text-stroke:.22px #373a3c;">Archivos</span>
<div class="a" id="drop"></div>
<span class="t" id="tPuede" style="left:752.5px;top:661.5px;font-size:15.4px;transform:scaleX(1.078);-webkit-text-stroke:.22px #373a3c;">Puede arrastrar y soltar archivos aquí para añadirlos</span>

<svg id="darrow" style="left:900px;top:570px" width="100" height="80" viewBox="900 570 100 80"><defs><linearGradient id="ag" x1="0" y1="0" x2="0" y2="1"><stop offset="0" stop-color="#97addf"/><stop offset="1" stop-color="#5474c6"/></linearGradient><filter id="as" x="-30%" y="-30%" width="160%" height="180%"><feGaussianBlur stdDeviation="3.2"/></filter></defs>
<path d="M924.3 589 H968.7 V610 H977.6 L946.8 634.5 L915.7 610 H924.3 Z" fill="#000" opacity=".22" filter="url(#as)"/>
<path d="M924.3 583.6 H968.7 V606.7 H977.6 L946.8 630.4 L915.7 606.7 H924.3 Z" fill="url(#ag)" stroke="#6a88d0" stroke-width=".8" stroke-linejoin="miter"/></svg>
<div class="a" style="left:366px;top:84px;width:18px;height:33px;background:#fcfcfc;"></div>
<svg id="cursor" style="left:360px;top:80px" width="24" height="28" viewBox="360 80 24 28"><path d="M366.4 85.4 V101.3 L370.5 97.9 L373.2 103.5 L375.8 102.3 L373.3 97.1 H377.7 Z" fill="#fff" stroke="#1a1a2a" stroke-width="1.1" stroke-linejoin="miter"/></svg>
<!-- highlights -->
<div class="hl" style="left:398px;top:456px;width:54px;height:48px;border-radius:7px;"></div>
<div class="hl" style="left:377px;top:441px;width:1118px;height:266px;"></div>
</body>
</html>
